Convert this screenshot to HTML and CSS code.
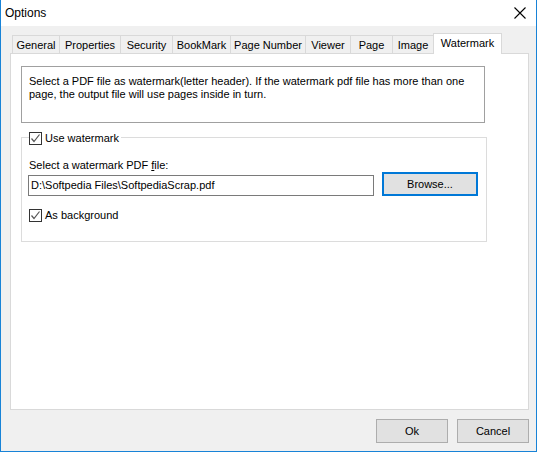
FILE: index.html
```html
<!DOCTYPE html>
<html>
<head>
<meta charset="utf-8">
<title>Options</title>
<link rel="stylesheet" href="styles.css">
</head>
<body>
<div class="window">
  <div class="titlebar">
    <span class="title">Options</span>
    <svg class="close" width="12" height="12" viewBox="0 0 12 12"><path d="M0.5 0.5 L11.5 11.5 M11.5 0.5 L0.5 11.5" stroke="#000" stroke-width="1.1" fill="none"/></svg>
  </div>
  <div class="body">
    <div class="tabs">
      <div class="tab w-general">General</div>
      <div class="tab w-properties">Properties</div>
      <div class="tab w-security">Security</div>
      <div class="tab w-bookmark">BookMark</div>
      <div class="tab w-pagenumber">Page Number</div>
      <div class="tab w-viewer">Viewer</div>
      <div class="tab w-page">Page</div>
      <div class="tab w-image">Image</div>
      <div class="tab tab-active w-watermark">Watermark</div>
    </div>
    <div class="panel">
      <div class="desc">Select a PDF file as watermark(letter header). If the watermark pdf file has more than one page, the output file will use pages inside in turn.</div>
      <div class="group">
        <div class="legend">
          <span class="check"><svg width="11" height="11" viewBox="0 0 11 11"><path d="M1.5 5.5 L4 8.5 L9.5 1.5" stroke="#555" stroke-width="1.2" fill="none"/></svg></span>
          <span>Use watermark</span>
        </div>
        <div class="label">Select a watermark PDF <u>f</u>ile:</div>
        <div class="file-row">
          <div class="input">D:\Softpedia Files\SoftpediaScrap.pdf</div>
          <div class="btn btn-default">Browse...</div>
        </div>
        <div class="checkrow">
          <span class="check"><svg width="11" height="11" viewBox="0 0 11 11"><path d="M1.5 5.5 L4 8.5 L9.5 1.5" stroke="#555" stroke-width="1.2" fill="none"/></svg></span>
          <span>As background</span>
        </div>
      </div>
    </div>
    <div class="footer">
      <div class="btn">Ok</div>
      <div class="btn">Cancel</div>
    </div>
  </div>
</div>
</body>
</html>
```

FILE: styles.css
```css
html, body {
  margin: 0;
  padding: 0;
  background: #fff;
}
.window {
  box-sizing: border-box;
  width: 537px;
  height: 452px;
  border: 1px solid #1883d7;
  border-top: none;
  background: #f0f0f0;
  display: flex;
  flex-direction: column;
  font-family: "Liberation Sans", Arial, sans-serif;
  font-size: 11px;
  color: #000;
}
.titlebar {
  height: 26px;
  background: #fff;
  display: flex;
  align-items: center;
  justify-content: space-between;
  padding: 0 10px 0 4px;
}
.title {
  font-size: 12px;
  margin-top: -1px;
}
.close {
  margin-top: -1px;
}
.body {
  flex: 1;
  display: flex;
  flex-direction: column;
  padding: 7px 7px 8px 9px;
}
.tabs {
  display: flex;
  align-items: flex-end;
  height: 20px;
  padding-left: 2px;
}
.tab {
  box-sizing: border-box;
  height: 18px;
  border-top: 1px solid #d9d9d9;
  border-left: 1px solid #d9d9d9;
  background: #f0f0f0;
  display: flex;
  align-items: center;
  justify-content: center;
  padding-top: 1px;
  white-space: nowrap;
}
.tab-active {
  height: 21px;
  margin-bottom: -1px;
  background: #fff;
  border-right: 1px solid #d9d9d9;
  position: relative;
  z-index: 1;
  padding-top: 0;
  padding-bottom: 3px;
}
.w-general { width: 47px; }
.w-properties { width: 61px; }
.w-security { width: 52px; }
.w-bookmark { width: 58px; }
.w-pagenumber { width: 75px; }
.w-viewer { width: 45px; }
.w-page { width: 42px; }
.w-image { width: 41px; }
.w-watermark { width: 69px; }
.panel {
  box-sizing: border-box;
  height: 357px;
  width: 519px;
  border: 1px solid #d9d9d9;
  background: #fff;
  padding: 12px 10px 0 10px;
}
.desc {
  box-sizing: border-box;
  width: 464px;
  height: 57px;
  border: 1px solid #a0a0a0;
  padding: 8px 7px 0 7px;
  line-height: 13px;
}
.group {
  box-sizing: border-box;
  width: 466px;
  height: 105px;
  margin-top: 14px;
  border: 1px solid #dcdcdc;
  padding: 0 0 0 6px;
}
.legend {
  display: flex;
  align-items: center;
  width: fit-content;
  margin-top: -7px;
  margin-left: 1px;
  background: #fff;
  height: 14px;
  gap: 3px;
  padding-right: 2px;
}
.check {
  box-sizing: border-box;
  width: 13px;
  height: 13px;
  border: 1px solid #333;
  background: #fff;
  display: flex;
  align-items: center;
  justify-content: center;
}
.label {
  margin-top: 13px;
  margin-left: 1px;
  height: 14px;
  line-height: 14px;
}
.file-row {
  display: flex;
  align-items: flex-end;
  gap: 8px;
  margin-top: 0;
}
.input {
  box-sizing: border-box;
  width: 346px;
  height: 21px;
  border: 1px solid #7a7a7a;
  padding: 0 2px;
  line-height: 19px;
  white-space: nowrap;
}
.btn {
  box-sizing: border-box;
  width: 72px;
  height: 24px;
  background: #e1e1e1;
  border: 1px solid #adadad;
  display: flex;
  align-items: center;
  justify-content: center;
}
.btn-default {
  width: 96px;
  border: 2px solid #0078d7;
}
.checkrow {
  display: flex;
  align-items: center;
  gap: 3px;
  margin-top: 12px;
  margin-left: 1px;
  height: 14px;
}
.footer {
  display: flex;
  justify-content: flex-end;
  gap: 9px;
  margin-top: auto;
}
```
